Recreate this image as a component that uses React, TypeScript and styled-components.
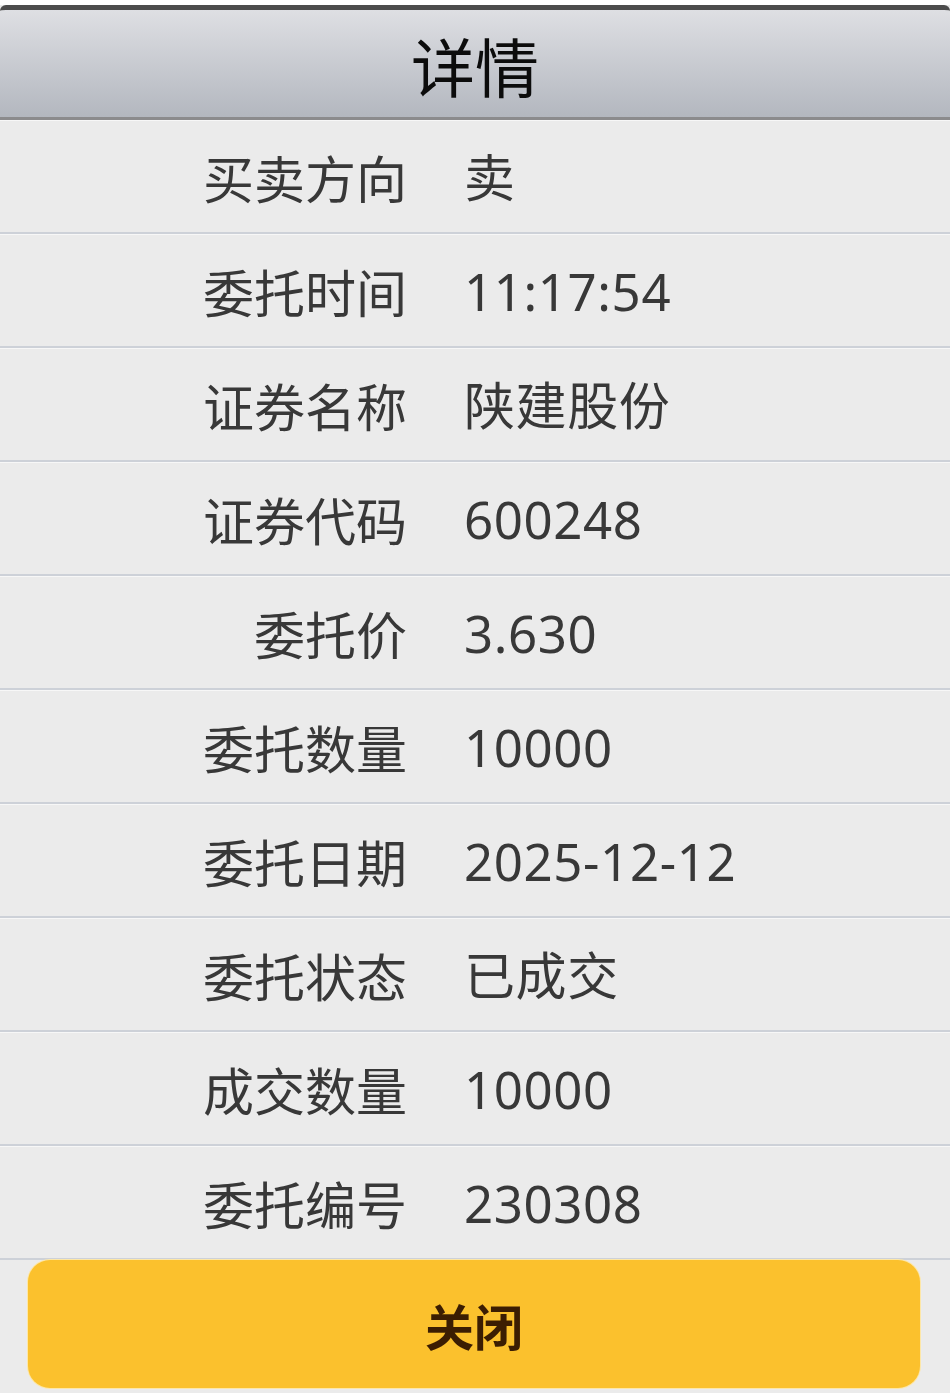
import React from "react";
import styled, { createGlobalStyle } from "styled-components";

const GlobalStyle = createGlobalStyle`
  html, body {
    margin: 0;
    padding: 0;
    background: #ebebeb;
  }
  * { box-sizing: border-box; }
`;

const Screen = styled.div`
  width: 950px;
  min-height: 1393px;
  border-top: 5px solid #ffffff;
  background: #ebebeb;
  display: flex;
  flex-direction: column;
`;

const Header = styled.header`
  height: 115px;
  border-top: 5px solid #4c4c4c;
  border-bottom: 3px solid #8b8b8d;
  border-radius: 6px 6px 0 0;
  background: linear-gradient(#dedfe3, #b3b7bf);
  display: flex;
  align-items: center;
  justify-content: center;
`;

const Title = styled.h1`
  margin: 0;
  font-family: "Noto Sans CJK SC", "Noto Sans", sans-serif;
  font-size: 64px;
  font-weight: 400;
  line-height: 1;
  color: #0c0c0c;
  padding-top: 1px;
`;

const List = styled.div`
  display: flex;
  flex-direction: column;
`;

const Row = styled.div`
  height: 114px;
  border-top: 1px solid #f7f7f7;
  border-bottom: 2px solid #cdd1d8;
  display: grid;
  grid-template-columns: 407px 1fr;
  column-gap: 57px;
  align-items: center;
  padding-top: 1px;
`;

const Label = styled.span`
  text-align: right;
  font-family: "Noto Sans CJK SC", sans-serif;
  font-size: 51px;
  line-height: 1;
  color: #383838;
`;

const Value = styled.span`
  font-family: "Noto Sans", "Noto Sans CJK SC", sans-serif;
  font-size: 51px;
  line-height: 1;
  color: #383838;
  letter-spacing: 0.6px;
`;

const Footer = styled.div`
  padding: 0 30px 5px 28px;
  display: flex;
`;

const CloseButton = styled.button`
  flex: 1;
  height: 128px;
  border: none;
  border-radius: 22px;
  background: #fbc12d;
  box-shadow: 0 0 0 1px #fde7a8;
  font-family: "Noto Sans CJK SC", sans-serif;
  font-size: 49px;
  font-weight: 700;
  color: #3b1d02;
  display: flex;
  align-items: center;
  justify-content: center;
  padding: 0;
`;

const rows: [string, string][] = [
  ["买卖方向", "卖"],
  ["委托时间", "11:17:54"],
  ["证券名称", "陕建股份"],
  ["证券代码", "600248"],
  ["委托价", "3.630"],
  ["委托数量", "10000"],
  ["委托日期", "2025-12-12"],
  ["委托状态", "已成交"],
  ["成交数量", "10000"],
  ["委托编号", "230308"],
];

export default function App() {
  return (
    <>
      <GlobalStyle />
      <Screen>
        <Header>
          <Title>详情</Title>
        </Header>
        <List>
          {rows.map(([label, value]) => (
            <Row key={label}>
              <Label>{label}</Label>
              <Value>{value}</Value>
            </Row>
          ))}
        </List>
        <Footer>
          <CloseButton>关闭</CloseButton>
        </Footer>
      </Screen>
    </>
  );
}
